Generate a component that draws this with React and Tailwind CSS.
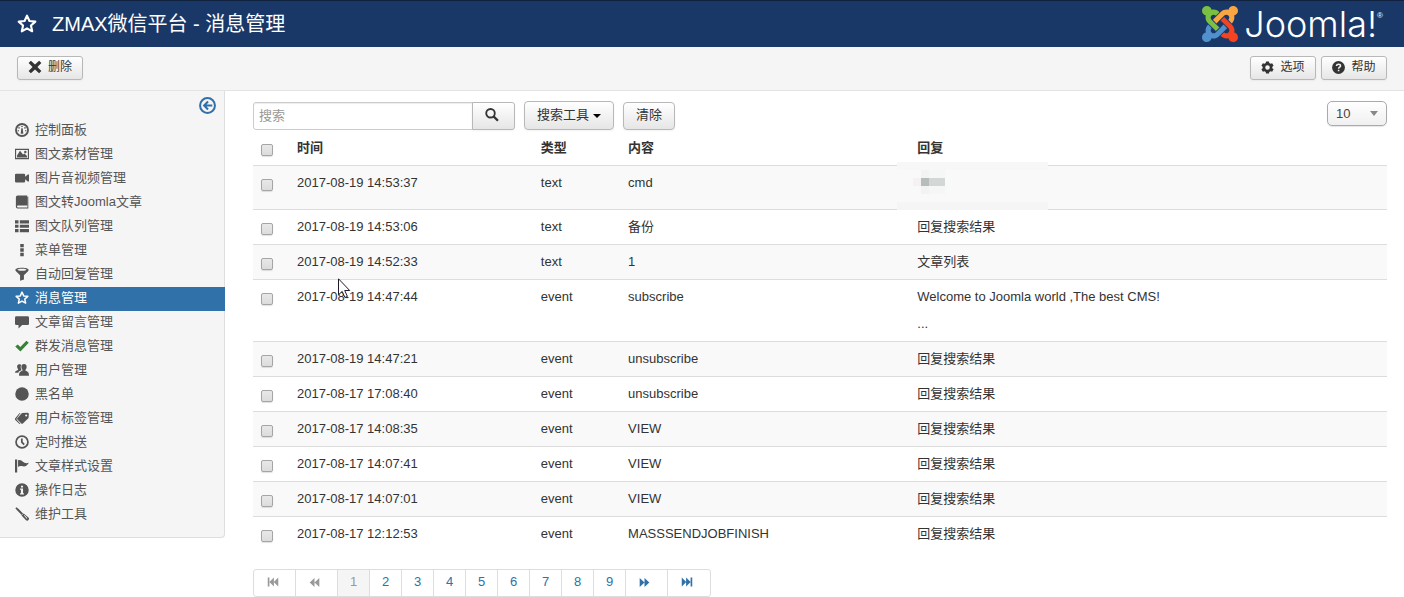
import React, { useState } from 'react';

const ICONS = {
    star: <path d="M8 1.300l1.950 4.300 4.700.5-3.500 3.150 1 4.600L8 11.500l-4.150 2.350 1-4.600-3.500-3.150 4.700-.5z" fill="none" stroke="currentColor" strokeWidth="1.700" strokeLinejoin="round" />,
    dashboard: (
        <>
            <circle cx="8" cy="8" r="6.900" fill="none" stroke="currentColor" strokeWidth="2.100" />
            <path d="M7.200 6h1.600l.7 6.200h-3z" />
            <circle cx="8" cy="4" r=".9" />
            <circle cx="4.600" cy="5.600" r=".9" />
            <circle cx="11.400" cy="5.600" r=".9" />
            <circle cx="3.700" cy="8.800" r=".8" />
            <circle cx="12.300" cy="8.800" r=".8" />
        </>
    ),
    image: <path fillRule="evenodd" d="M0 2h16v12H0zM1.300 3.300v9.400h13.400V3.300zM2.300 12V9.600l3.400-5.200L9.200 8.600l1.600-1.200 2.900 3V12zM11.800 4.200a1.400 1.400 0 110 2.800 1.400 1.400 0 010-2.800z" />,
    video: <path d="M1.400 3h8.800q1.400 0 1.400 1.400v2.300L14.600 4H16v8h-1.400l-3-2.700v2.300q0 1.400-1.400 1.400H1.400Q0 13 0 11.600V4.400Q0 3 1.400 3z" />,
    book: <path fillRule="evenodd" d="M3 .5h11V12H3.400a.9.9 0 000 2.200H14.200V2H15.200V15.500H3Q1 15.500 1 13.500V2.500Q1 .5 3 .5z" />,
    list: <path d="M0 1.500h4v3.500H0zM5.500 1.500H16v3.500H5.500zM0 6.500h4V10H0zM5.500 6.500H16V10H5.500zM0 11.500h4V15H0zM5.500 11.500H16V15H5.500z" />,
    dots: <path d="M6 1h4v3.800H6zM6 6.100h4v3.800H6zM6 11.200h4V15H6z" />,
    filter: <path fillRule="evenodd" d="M8 .8c4.300 0 7.600 1 7.600 2.500 0 .6-.5 1.200-1 1.700L10.200 9.300v5L5.800 15.600V9.300L1.400 5C.9 4.500.4 3.900.4 3.300.4 1.800 3.700.8 8 .8zM8 2C5 2 2.800 2.600 2.800 3.200S5 4.300 8 4.300s5.200-.5 5.200-1.100S11 2 8 2z" />,
    comment: <path d="M1.500 1.500h13Q16 1.500 16 3v7q0 1.500-1.500 1.500H8.200L4 15.500v-4H1.500Q0 11.500 0 10V3q0-1.500 1.500-1.500z" />,
    check: <path d="M.3 8.600l2.800-2.400 3 3L13 2l2.700 2.300L6.200 14.200z" />,
    users: (
        <>
            <path d="M5.200 1.500c1 0 1.600.3 2 .8-.9 1.300-.9 3.500 0 5 .2.500.3 1-.1 1.400C5.500 9.200 4.200 9.900 3.800 11H0c0-1.800 1.500-2.200 3.500-3V7C2.500 6 2.300 4.700 2.500 3.500c.2-1.300 1.300-2 2.700-2z" />
            <path d="M10.300 1.200c1.900 0 3 1.200 3 3 0 1.500-.5 2.700-1.300 3.500v1.200c2.500.8 4 1.800 4 5.600H4.600c0-3.800 1.500-4.800 4-5.600V7.700c-.8-.8-1.300-2-1.300-3.500 0-1.800 1.100-3 3-3z" />
        </>
    ),
    circle: <circle cx="8" cy="8" r="7.700" />,
    tag: <path fillRule="evenodd" d="M8 2.200L14.300 2q1.500 0 1.500 1.500L15.500 8 9 14.300q-.9.700-1.800 0L2.800 9.800q-.9-.9 0-1.800zM12.800 4a1.200 1.200 0 100 2.400 1.200 1.200 0 000-2.400zM6.300 2.200L2 8.200q-.6.900 0 1.800l4.200 4.600-1 .3L.3 10.200q-.7-.9 0-1.800L5 2.600z" />,
    clock: <path d="M8 1.200a6.800 6.800 0 110 13.600A6.800 6.800 0 118 1.200zM7.800 4v4.200l2.700 2.900" fill="none" stroke="currentColor" strokeWidth="2" />,
    flag: <path d="M0 .5h2.500V15.500H0zM3.500 1.500c2.500-.8 4 .3 5.500 1.700 2 1.700 4.200 2 6.800 1-1.600 3-4 4.800-6.800 4.200-2-.4-3.600-.7-5.500.6z" />,
    info: <path fillRule="evenodd" d="M8 .3a7.700 7.700 0 110 15.400A7.700 7.700 0 118 .3zM6.800 3v2.200h2.400V3zM5.800 6.400v1.400h1v3.800h-1V13h4.400v-1.400h-1V6.400z" />,
    tool: (
        <>
            <path d="M.4 1.400L1.600.4l2.600 1.800 5 5.200-1.600 1.600-5-5z" />
            <path fillRule="evenodd" d="M7.400 9.800L9.900 7.300 15.400 12q1.200 1.200.2 2.500-1.300 1.900-3 .7zM10.100 9.500l3.300 3.900.7-.7-3.400-3.700z" />
        </>
    ),
    remove: <path d="M3.300.9L8 5.200 12.700.9 15.300 3.500 10.800 8l4.500 4.500-2.600 2.600L8 10.800l-4.700 4.300L.7 12.500 5.200 8 .7 3.500z" />,
    gear: <path fillRule="evenodd" d="M6.200.5h3.600l.4 2.100 1.500.9 2-.8 1.800 3.100-1.600 1.400v1.600l1.600 1.400-1.800 3.100-2-.8-1.500.9-.4 2.100H6.200l-.4-2.100-1.500-.9-2 .8L.5 10.200l1.600-1.400V7.200L.5 5.800l1.800-3.100 2 .8 1.500-.9zM8 5.200a2.800 2.800 0 100 5.600 2.800 2.800 0 000-5.600z" />,
    help: (
        <>
            <circle cx="8" cy="8" r="7.900" />
            <path d="M5.600 6.300c0-1.500 1-2.400 2.500-2.400s2.400.8 2.400 2.100c0 1.600-2.400 1.700-2.400 3.500M8.100 10.700v2" fill="none" stroke="#f0f0f0" strokeWidth="1.900" />
        </>
    ),
    search: (
        <>
            <circle cx="6.300" cy="6" r="4.900" fill="none" stroke="currentColor" strokeWidth="2.100" />
            <path d="M9.800 9.600l5 5" stroke="currentColor" strokeWidth="2.600" />
        </>
    ),
    back: <path d="M8 1a7 7 0 110 14A7 7 0 118 1zM8.500 4.300L4.800 8l3.700 3.700M5 8h7.500" fill="none" stroke="currentColor" strokeWidth="1.900" />,
    first: <path d="M1 2h2.200v12H1zM3.200 8l6-6v12zM9 8l6-6v12z" />,
    prev: <path d="M1 8l7-6.500v13zM8 8l7-6.500v13z" />,
    next: <path d="M15 8L8 1.500v13zM8 8L1 1.500v13z" />,
    last: <path d="M15 2h-2.200v12H15zM12.800 8l-6-6v12zM7 8L1 2v12z" />,
};

function Icon({ name, className = 'size-3.5' }) {
    return (
        <svg viewBox="0 0 16 16" fill="currentColor" aria-hidden="true" className={`shrink-0 ${className}`}>
            {ICONS[name]}
        </svg>
    );
}

const menu = [
    { icon: 'dashboard', label: '控制面板' },
    { icon: 'image', label: '图文素材管理' },
    { icon: 'video', label: '图片音视频管理' },
    { icon: 'book', label: '图文转Joomla文章' },
    { icon: 'list', label: '图文队列管理' },
    { icon: 'dots', label: '菜单管理' },
    { icon: 'filter', label: '自动回复管理' },
    { icon: 'star', label: '消息管理', active: true },
    { icon: 'comment', label: '文章留言管理' },
    { icon: 'check', label: '群发消息管理', color: 'text-[#378137]' },
    { icon: 'users', label: '用户管理' },
    { icon: 'circle', label: '黑名单' },
    { icon: 'tag', label: '用户标签管理' },
    { icon: 'clock', label: '定时推送' },
    { icon: 'flag', label: '文章样式设置' },
    { icon: 'info', label: '操作日志' },
    { icon: 'tool', label: '维护工具' },
];

const messages = [
    { time: '2017-08-19 14:53:37', type: 'text', content: 'cmd', masked: true },
    { time: '2017-08-19 14:53:06', type: 'text', content: '备份', reply: '回复搜索结果' },
    { time: '2017-08-19 14:52:33', type: 'text', content: '1', reply: '文章列表' },
    { time: '2017-08-19 14:47:44', type: 'event', content: 'subscribe', reply: 'Welcome to Joomla world ,The best CMS!', more: true, pointer: true },
    { time: '2017-08-19 14:47:21', type: 'event', content: 'unsubscribe', reply: '回复搜索结果' },
    { time: '2017-08-17 17:08:40', type: 'event', content: 'unsubscribe', reply: '回复搜索结果' },
    { time: '2017-08-17 14:08:35', type: 'event', content: 'VIEW', reply: '回复搜索结果' },
    { time: '2017-08-17 14:07:41', type: 'event', content: 'VIEW', reply: '回复搜索结果' },
    { time: '2017-08-17 14:07:01', type: 'event', content: 'VIEW', reply: '回复搜索结果' },
    { time: '2017-08-17 12:12:53', type: 'event', content: 'MASSSENDJOBFINISH', reply: '回复搜索结果' },
];

const btn = 'flex items-center justify-center border border-[#b8b8b8] bg-linear-to-b from-white to-[#e6e6e6] pb-0.5 text-[#333] shadow-[0_1px_2px_rgba(0,0,0,0.05)] cursor-pointer';

function JoomlaLogo() {
    const arm = 'M16.719 14.759L14.220 17.260l-2.370 2.370-.462.466c-1.368 1.365-3.297 1.830-5.047 1.397C6.014 22.917 4.737 23.976 3.214 23.976 1.438 23.976 0 22.540 0 20.765c0-1.550 1.098-2.842 2.558-3.143-.484-1.790.068-3.679 1.400-5.054l.163-.165 2.370 2.370-.101.100c-.763.764-.766 2.001-.003 2.764.763.763 2 .763 2.764 0l.459-.459 2.370-2.370L14.350 12.390z';
    return (
        <a href="#" className="flex items-center text-white">
            <svg viewBox="0 0 24 24" className="size-9" aria-hidden="true">
                <path d={arm} fill="#5091cd" />
                <path d={arm} fill="#f44321" transform="rotate(-90 12 12)" />
                <path d={arm} fill="#f9a541" transform="rotate(180 12 12)" />
                <path d={arm} fill="#7ac143" transform="rotate(90 12 12)" />
            </svg>
            <span className="ml-1.5 font-[Inter,sans-serif] text-4xl leading-9 font-light">Joomla!</span>
            <span className="self-start pt-1 text-[8px] leading-3">®</span>
        </a>
    );
}

function CheckBox({ label, checked, onChange }) {
    return (
        <input
            type="checkbox"
            aria-label={label}
            checked={checked}
            onChange={onChange}
            className="mt-[5px] block size-3 appearance-none rounded-[2px] border border-[#a5a5a5] bg-linear-to-b from-[#e8e8e8] to-[#dcdcdc] shadow-[0_1px_1px_rgba(0,0,0,0.12)] checked:bg-[#3071a9]"
        />
    );
}

// pixelated cover over a private reply
function Mosaic() {
    return (
        <svg width="151" height="48" viewBox="0 0 151 48" shapeRendering="crispEdges" aria-hidden="true" className="absolute -top-1 -left-3">
            <rect width="151" height="48" fill="#f9f9f9" />
            <rect width="151" height="8" fill="#f7f7f7" />
            <rect y="40" width="151" height="8" fill="#f5f5f5" />
            <rect x="16" y="16" width="8" height="8" fill="#f5f3f2" />
            <rect x="24" y="8" width="8" height="8" fill="#f2f3f3" />
            <rect x="32" y="8" width="16" height="8" fill="#f5f6f6" />
            <rect x="24" y="16" width="8" height="8" fill="#b6bdbb" />
            <rect x="32" y="16" width="16" height="8" fill="#d3d8d7" />
            <rect x="24" y="24" width="8" height="8" fill="#f1f4f3" />
            <rect x="32" y="24" width="16" height="8" fill="#f4f7f6" />
        </svg>
    );
}

function Pointer() {
    return (
        <svg width="13" height="21" viewBox="0 0 13 21" aria-hidden="true" className="absolute -top-0.5 left-[49px]">
            <path d="M.5.8v16l3.700-3.400 2.700 6.100 2.500-1.100-2.700-5.900h5z" fill="#fff" stroke="#1b1b2b" />
        </svg>
    );
}

function Pagination() {
    const [page, setPage] = useState(1);
    const cell = 'flex h-[26px] items-center justify-center border-l border-[#ddd] pb-0.5 first:border-l-0 cursor-pointer';
    const atStart = page === 1;
    return (
        <nav aria-label="分页" className="mt-[18px] flex w-fit rounded-[3px] border border-[#ddd] text-[13px] text-[#3071a9]">
            <button type="button" aria-label="首页" onClick={() => setPage(1)} className={`${cell} w-[41px] pr-1 ${atStart ? 'text-[#999]' : ''}`}>
                <Icon name="first" className="size-3" />
            </button>
            <button type="button" aria-label="上一页" onClick={() => setPage(Math.max(1, page - 1))} className={`${cell} w-[42px] pr-1 ${atStart ? 'text-[#999]' : ''}`}>
                <Icon name="prev" className="size-[11px]" />
            </button>
            {[1, 2, 3, 4, 5, 6, 7, 8, 9].map(n => (
                <button key={n} type="button" onClick={() => setPage(n)} className={`${cell} w-8 ${n === page ? 'bg-[#f5f5f5] text-[#999]' : ''}`}>
                    {n}
                </button>
            ))}
            <button type="button" aria-label="下一页" onClick={() => setPage(Math.min(9, page + 1))} className={`${cell} w-[42px] pr-1`}>
                <Icon name="next" className="size-[11px]" />
            </button>
            <button type="button" aria-label="末页" onClick={() => setPage(9)} className={`${cell} w-[43px] pr-1`}>
                <Icon name="last" className="size-3" />
            </button>
        </nav>
    );
}

function App() {
    const [selected, setSelected] = useState([]);
    const [search, setSearch] = useState('');

    const toggle = (index) => {
        setSelected(selected.includes(index) ? selected.filter(i => i !== index) : [...selected, index]);
    };

    const toggleAll = () => {
        setSelected(selected.length === messages.length ? [] : messages.map((m, i) => i));
    };

    return (
        <div className="bg-white font-['Liberation_Sans','Noto_Sans_CJK_SC',sans-serif] text-[13px] leading-[18px] text-[#333]">
            <header className="flex h-[47px] items-center justify-between border-t border-[#10223e] bg-[#1a3867] pr-[21px] pl-[17px] text-white">
                <h1 className="flex items-center text-xl">
                    <Icon name="star" className="mr-[15px] size-5" />
                    ZMAX微信平台 - 消息管理
                </h1>
                <JoomlaLogo />
            </header>

            <div className="flex h-11 items-center justify-between border-b border-[#e3e3e3] bg-[#f5f5f5] px-[17px] pb-px text-xs">
                <button type="button" className={`${btn} h-6 w-[66px] gap-1.5 rounded-[3px]`}>
                    <Icon name="remove" /> 删除
                </button>
                <div className="flex gap-[5px]">
                    <button type="button" className={`${btn} h-6 w-[66px] gap-1.5 rounded-[3px]`}>
                        <Icon name="gear" className="size-[13px]" /> 选项
                    </button>
                    <button type="button" className={`${btn} h-6 w-[66px] gap-1.5 rounded-[3px]`}>
                        <Icon name="help" className="size-[13px]" /> 帮助
                    </button>
                </div>
            </div>

            <div className="flex items-start">
                <aside className="w-[225px] shrink-0 rounded-br-[4px] border-r border-b border-[#dedede] bg-[#f5f5f5] pb-2.5">
                    <div className="flex h-7 items-center justify-end pr-2">
                        <button type="button" aria-label="收起侧栏" className="cursor-pointer text-[#3071a9]">
                            <Icon name="back" className="size-[17px]" />
                        </button>
                    </div>
                    <ul>
                        {menu.map(item => (
                            <li key={item.label}>
                                <a
                                    href="#"
                                    className={`-mr-px flex h-6 items-center gap-1.5 pb-0.5 pl-[15px] ${item.active ? 'bg-[#3071a9] text-white' : 'text-[#555]'}`}
                                >
                                    <Icon name={item.icon} className={`size-3.5 ${item.color || ''}`} />
                                    {item.label}
                                </a>
                            </li>
                        ))}
                    </ul>
                </aside>

                <main className="min-w-0 flex-1 pt-2.5 pr-[17px] pl-7">
                    <div className="mb-px flex items-end">
                        <input
                            type="text"
                            aria-label="搜索"
                            placeholder="搜索"
                            value={search}
                            onChange={(e) => setSearch(e.target.value)}
                            className="h-7 w-[220px] rounded-l-[3px] border border-[#ccc] px-[5px] pb-0.5 shadow-[inset_0_1px_1px_rgba(0,0,0,0.075)] placeholder:text-[#999]"
                        />
                        <button type="button" aria-label="提交搜索" className={`${btn} -ml-px h-7 w-[43px] rounded-r-[3px] pr-1`}>
                            <Icon name="search" />
                        </button>
                        <button type="button" className={`${btn} ml-[9px] h-[29px] w-[90px] gap-1 rounded-[4px]`}>
                            搜索工具
                            <span className="mt-0.5 border-x-4 border-t-4 border-x-transparent border-t-black" />
                        </button>
                        <button type="button" onClick={() => setSearch('')} className={`${btn} ml-[9px] h-7 w-[52px] rounded-[4px]`}>
                            清除
                        </button>
                        <div className="relative ml-auto self-start">
                            <select
                                aria-label="每页数量"
                                defaultValue="10"
                                className="block h-[25px] w-[60px] appearance-none rounded-[5px] border border-[#aaa] bg-linear-to-b from-white to-[#f0f0f0] pl-2 text-[#444] shadow-[0_1px_1px_rgba(0,0,0,0.1)]"
                            >
                                <option>10</option>
                                <option>20</option>
                                <option>50</option>
                            </select>
                            <span className="pointer-events-none absolute top-2.5 right-[9px] border-x-4 border-t-5 border-x-transparent border-t-[#888]" />
                        </div>
                    </div>

                    <table className="w-full table-fixed border-collapse text-left">
                        <colgroup>
                            <col className="w-9" />
                            <col className="w-[21.5%]" />
                            <col className="w-[7.7%]" />
                            <col className="w-[25.5%]" />
                            <col />
                        </colgroup>
                        <thead>
                            <tr className="align-top">
                                <th className="px-2 py-2"><CheckBox label="全选" checked={selected.length === messages.length} onChange={toggleAll} /></th>
                                <th className="px-2 py-2">时间</th>
                                <th className="px-2 py-2">类型</th>
                                <th className="px-2 py-2">内容</th>
                                <th className="px-2 py-2">回复</th>
                            </tr>
                        </thead>
                        <tbody>
                            {messages.map((m, index) => (
                                <tr key={m.time} className="border-t border-[#ddd] align-top odd:bg-[#f9f9f9]">
                                    <td className="px-2 py-2"><CheckBox label={m.time} checked={selected.includes(index)} onChange={() => toggle(index)} /></td>
                                    <td className="relative px-2 py-2">
                                        {m.time}
                                        {m.pointer && <Pointer />}
                                    </td>
                                    <td className="px-2 py-2">{m.type}</td>
                                    <td className="px-2 py-2">{m.content}</td>
                                    <td className="relative px-2 py-2">
                                        {m.masked ? <div className="h-[27px]"><Mosaic /></div> : <p>{m.reply}</p>}
                                        {m.more && <p className="mt-[9px]">...</p>}
                                    </td>
                                </tr>
                            ))}
                        </tbody>
                    </table>

                    <Pagination />
                </main>
            </div>
        </div>
    );
}

export default App;
